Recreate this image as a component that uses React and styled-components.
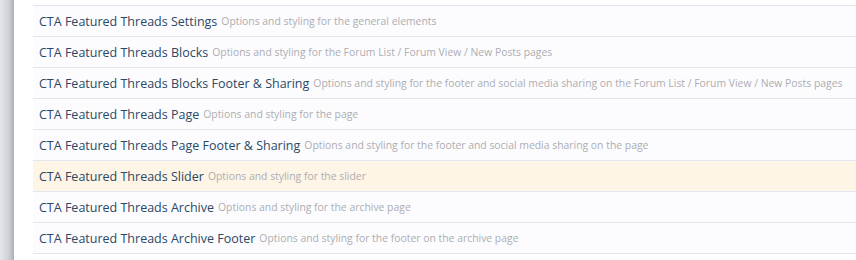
import styled, { createGlobalStyle } from "styled-components";

const GlobalStyle = createGlobalStyle`
  body {
    margin: 0;
    background: #fff;
    font-family: "Open Sans", "Liberation Sans", sans-serif;
  }
`;

const Page = styled.div`
  display: flex;
  width: 856px;
  height: 260px;
  overflow: hidden;
`;

const SideBar = styled.div`
  width: 14px;
  flex-shrink: 0;
  background: linear-gradient(90deg, #e4e6e9 0%, #cfd3d8 60%, #a9b0b8 100%);
`;

const Content = styled.div`
  flex: 1;
  padding: 5px 0 0 19px;
`;

const List = styled.ul`
  list-style: none;
  margin: 0;
  padding: 0;
  border-top: 1px solid #dfe6ee;
`;

const Row = styled.li`
  height: 30px;
  display: flex;
  align-items: center;
  padding-left: 6px;
  border-bottom: 1px solid #dfe6ee;
  background: ${(p) => (p.$active ? "#fef5e7" : "#fcfcff")};
  white-space: nowrap;
`;

const Title = styled.a`
  color: #2b4864;
  font-size: 12.5px;
  text-decoration: none;
`;

const Hint = styled.span`
  color: #adadb1;
  font-size: 10.4px;
  margin-left: 4px;
`;

const items = [
  ["CTA Featured Threads Settings", "Options and styling for the general elements"],
  ["CTA Featured Threads Blocks", "Options and styling for the Forum List / Forum View / New Posts pages"],
  ["CTA Featured Threads Blocks Footer & Sharing", "Options and styling for the footer and social media sharing on the Forum List / Forum View / New Posts pages"],
  ["CTA Featured Threads Page", "Options and styling for the page"],
  ["CTA Featured Threads Page Footer & Sharing", "Options and styling for the footer and social media sharing on the page"],
  ["CTA Featured Threads Slider", "Options and styling for the slider", true],
  ["CTA Featured Threads Archive", "Options and styling for the archive page"],
  ["CTA Featured Threads Archive Footer", "Options and styling for the footer on the archive page"],
];

export default function App() {
  return (
    <>
      <GlobalStyle />
      <Page>
        <SideBar />
        <Content>
          <List>
            {items.map(([title, hint, active]) => (
              <Row key={title} $active={active}>
                <Title href="#">{title}</Title>
                <Hint>{hint}</Hint>
              </Row>
            ))}
          </List>
        </Content>
      </Page>
    </>
  );
}
